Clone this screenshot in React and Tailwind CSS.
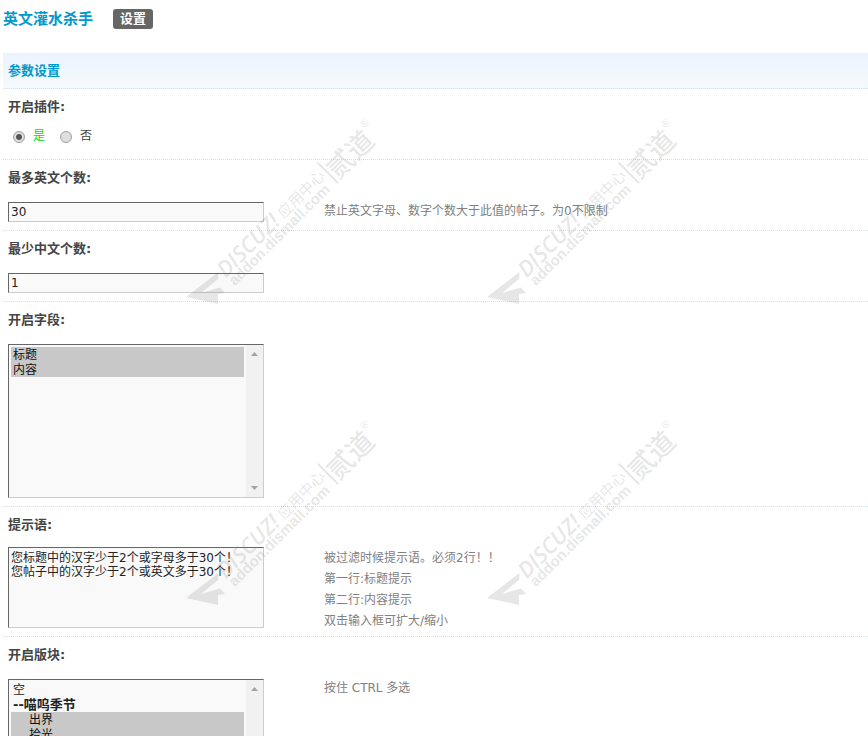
import { useId } from "react";

const fields = ["标题", "内容"];

const forums = [
  { value: "none", name: "空" },
  { value: "g1", name: "--喵呜季节", group: true },
  { value: "f1", name: "出界", child: true },
  { value: "f2", name: "拾光", child: true },
];

const marks = ["one", "two", "three", "four"];

function Row({ label, htmlFor, hint, children }) {
  return (
    <div className="border-b border-dotted border-[#cde3f4] px-[5px] py-2">
      <label
        htmlFor={htmlFor}
        className="block text-[13px] leading-5 font-bold text-[#444]"
      >
        {label}
      </label>
      <div className="grid grid-cols-[316px_1fr] pt-3">
        <div>{children}</div>
        <div className="-mb-2 pt-px text-xs leading-[21px] text-[#808080]">
          {hint?.map((line) => (
            <p key={line}>{line}</p>
          ))}
        </div>
      </div>
    </div>
  );
}

function TextRow({ label, value, hint }) {
  const id = useId();
  return (
    <Row label={label} htmlFor={id} hint={hint}>
      <input
        id={id}
        type="text"
        defaultValue={value}
        className="mt-0.5 block h-5 w-64 border border-t-[#666] border-r-[#ccc] border-b-[#ccc] border-l-[#666] bg-[#f9f9f9] px-0.5 text-xs text-[#222] outline-none"
      />
    </Row>
  );
}

function ListBox({ id, selected, children }) {
  return (
    <div className="mt-0.5 flex h-[154px] w-64 border border-t-[#666] border-r-[#ccc] border-b-[#ccc] border-l-[#666] bg-[#f9f9f9]">
      <select
        id={id}
        multiple
        defaultValue={selected}
        className="min-w-0 flex-1 overflow-y-auto bg-transparent px-0.5 py-0.5 text-xs text-[#222] outline-none [scrollbar-width:none]"
      >
        {children}
      </select>
      <div className="flex w-[17px] flex-col items-center justify-between bg-[#f1f1f1] py-[7px]">
        <svg width="7" height="4" viewBox="0 0 7 4" fill="#a3a3a3">
          <path d="M0 4 3.5 0 7 4Z" />
        </svg>
        <svg width="7" height="4" viewBox="0 0 7 4" fill="#a3a3a3">
          <path d="M0 0H7L3.5 4Z" />
        </svg>
      </div>
    </div>
  );
}

function Watermark() {
  return (
    <svg
      width="301"
      height="301"
      viewBox="0 0 301 301"
      fill="#808080"
      fillOpacity="0.2"
      fontFamily="'Liberation Sans', 'Noto Sans CJK SC', sans-serif"
      aria-hidden="true"
    >
      <path d="M6 187 38.5 162 38 169 21 183 40 177.5 45 183 38 184V194Z" />
      <g transform="translate(40 170) rotate(-45)">
        <text
          x="5"
          y="3"
          fontSize="22"
          fontStyle="italic"
          fontWeight="600"
          fontFamily="'Open Sans', sans-serif"
        >
          DISCUZ!
        </text>
        <text x="88" y="2" fontSize="15">
          应用中心
        </text>
        <text x="6" y="15" fontSize="15" fontWeight="bold">
          addon.dismall.com
        </text>
        <rect x="151" y="-14" width="2" height="29" />
        <text x="154" y="13" fontSize="27" fontWeight="500">
          贰道
        </text>
        <text x="209" y="-5" fontSize="11">
          ®
        </text>
      </g>
    </svg>
  );
}

export default function App() {
  return (
    <div className="relative h-screen overflow-x-hidden overflow-y-auto bg-white font-['DejaVu_Sans','Noto_Sans_CJK_SC',sans-serif] text-[#444] [scrollbar-width:none]">
      <header className="flex h-[53px] items-start gap-5 pt-[9px] pl-[3px]">
        <h1 className="text-[15px] leading-5 font-bold text-[#0099cc]">
          英文灌水杀手
        </h1>
        <button
          type="button"
          className="h-5 rounded-[3px] bg-[#666] px-[7px] text-[13px] leading-5 font-bold text-white"
        >
          设置
        </button>
      </header>

      <form className="pl-[3px]">
        <h2 className="border-b border-dotted border-[#cde3f4] bg-linear-to-b from-[#ebf3fd] to-[#f6fafe] px-[5px] text-[13px] leading-[35px] font-bold text-[#0099cc]">
          参数设置
        </h2>

        <Row label="开启插件:">
          <div className="flex h-[22px] items-start text-xs leading-[15px]">
            {["是", "否"].map((name, i) => (
              <label
                key={name}
                className="flex w-[47px] items-center gap-2 pl-[5px] text-[#444] has-checked:text-[#00dd00]"
              >
                <input
                  type="radio"
                  name="enabled"
                  defaultChecked={i === 0}
                  className="size-3 appearance-none rounded-full border border-[#a0a0a0] bg-[#dedede] bg-radial checked:from-[#555] checked:from-35% checked:to-[#dedede] checked:to-50%"
                />
                {name}
              </label>
            ))}
          </div>
        </Row>

        <TextRow
          label="最多英文个数:"
          value="30"
          hint={["禁止英文字母、数字个数大于此值的帖子。为0不限制"]}
        />
        <TextRow label="最少中文个数:" value="1" />

        <Row label="开启字段:" htmlFor="fields">
          <ListBox id="fields" selected={fields}>
            {fields.map((name) => (
              <option
                key={name}
                value={name}
                className="flex h-[15px] min-h-0 items-center px-0.5 py-0 pb-0.5 checked:bg-[#c8c8c8]"
              >
                {name}
              </option>
            ))}
          </ListBox>
        </Row>

        <Row
          label="提示语:"
          htmlFor="message"
          hint={[
            "被过滤时候提示语。必须2行！！",
            "第一行:标题提示",
            "第二行:内容提示",
            "双击输入框可扩大/缩小",
          ]}
        >
          <textarea
            id="message"
            defaultValue={
              "您标题中的汉字少于2个或字母多于30个！\n您帖子中的汉字少于2个或英文多于30个！"
            }
            className="block h-[81px] w-64 resize-none overflow-hidden border border-t-[#666] border-r-[#ccc] border-b-[#ccc] border-l-[#666] bg-[#f9f9f9] px-0.5 py-[3px] text-xs leading-[14px] text-[#222] outline-none"
          />
        </Row>

        <Row label="开启版块:" htmlFor="forums" hint={["按住 CTRL 多选"]}>
          <ListBox id="forums" selected={["f1", "f2"]}>
            {forums.map((f) => (
              <option
                key={f.value}
                value={f.value}
                className={
                  "flex h-[15px] min-h-0 items-center py-0 pb-0.5 checked:bg-[#c8c8c8] " +
                  (f.child ? "pl-[18px] " : "pl-0.5 ") +
                  (f.group ? "text-[13px] font-bold" : "")
                }
              >
                {f.name}
              </option>
            ))}
          </ListBox>
        </Row>
      </form>

      {/* Watermark tiles over the form */}
      <div className="pointer-events-none absolute top-[110px] left-[180px] grid grid-cols-[301px_301px]">
        {marks.map((m) => (
          <Watermark key={m} />
        ))}
      </div>
    </div>
  );
}
